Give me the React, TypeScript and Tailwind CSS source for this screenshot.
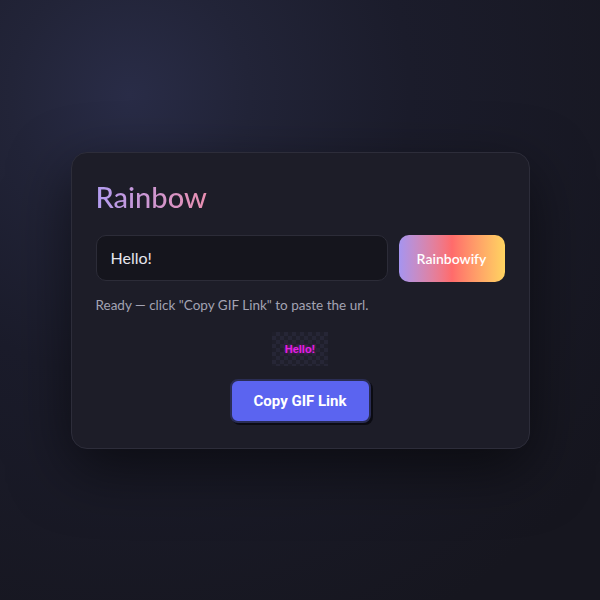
import React from "react";

export default function App() {
  return (
    <div
      className="w-[600px] h-[600px] flex items-start justify-center bg-[#181924] pt-[152px]"
      style={{
        fontFamily: "Lato, 'Liberation Sans', sans-serif",
        backgroundImage:
          "radial-gradient(circle at 130px 95px, #292c47 0px, #222438 120px, #1b1c2b 280px, #16161f 600px)",
      }}
    >
      <div className="w-[459px] rounded-[16px] border border-[#2d2d3a] bg-[#1d1d28] px-[24px] pt-[24px] pb-[25px] shadow-[0_20px_60px_rgba(0,0,0,0.55)]">
        <h1 className="text-[29px] leading-[40px] font-medium bg-gradient-to-r from-[#b29cf0] to-[#e88eb0] bg-clip-text text-transparent w-fit">
          Rainbow
        </h1>
        <div className="mt-[18px] flex gap-[11px]">
          <div className="flex-1 h-[46px] rounded-[10px] border border-[#2c2c38] bg-[#15151d] px-[14px] flex items-center text-[16px] text-[#e6e6ee]">
            Hello!
          </div>
          <button className="w-[106px] h-[47px] rounded-[10px] bg-gradient-to-r from-[#a594f0] via-[#ff6b6b] to-[#ffd460] text-white text-[14px] font-semibold">
            Rainbowify
          </button>
        </div>
        <p className="mt-[13px] text-[13.5px] leading-[20px] text-[#a3a3b3]">
          Ready — click "Copy GIF Link" to paste the url.
        </p>
        <div className="mt-[17px] flex justify-center">
          <div
            className="w-[56px] h-[34px] flex items-center justify-center"
            style={{
              backgroundColor: "#1f1f2b",
              backgroundImage:
                "linear-gradient(45deg, #262636 25%, transparent 25%, transparent 75%, #262636 75%), linear-gradient(45deg, #262636 25%, transparent 25%, transparent 75%, #262636 75%)",
              backgroundSize: "8px 8px",
              backgroundPosition: "0 0, 4px 4px",
            }}
          >
            <span
              className="text-[11px] font-bold text-[#e61ee6]"
              style={{ fontFamily: "'Liberation Sans', sans-serif", textShadow: "0 0 3px rgba(230,30,230,0.5)" }}
            >
              Hello!
            </span>
          </div>
        </div>
        <div className="mt-[13px] flex justify-center">
          <button
            className="w-[141px] h-[44px] rounded-[8px] bg-[#5b64f0] text-white text-[15px] font-bold border-2 border-[#2a2d55] shadow-[2px_2px_0_#0b0b12]"
            style={{ fontFamily: "Roboto, sans-serif" }}
          >
            Copy GIF Link
          </button>
        </div>
      </div>
    </div>
  );
}
